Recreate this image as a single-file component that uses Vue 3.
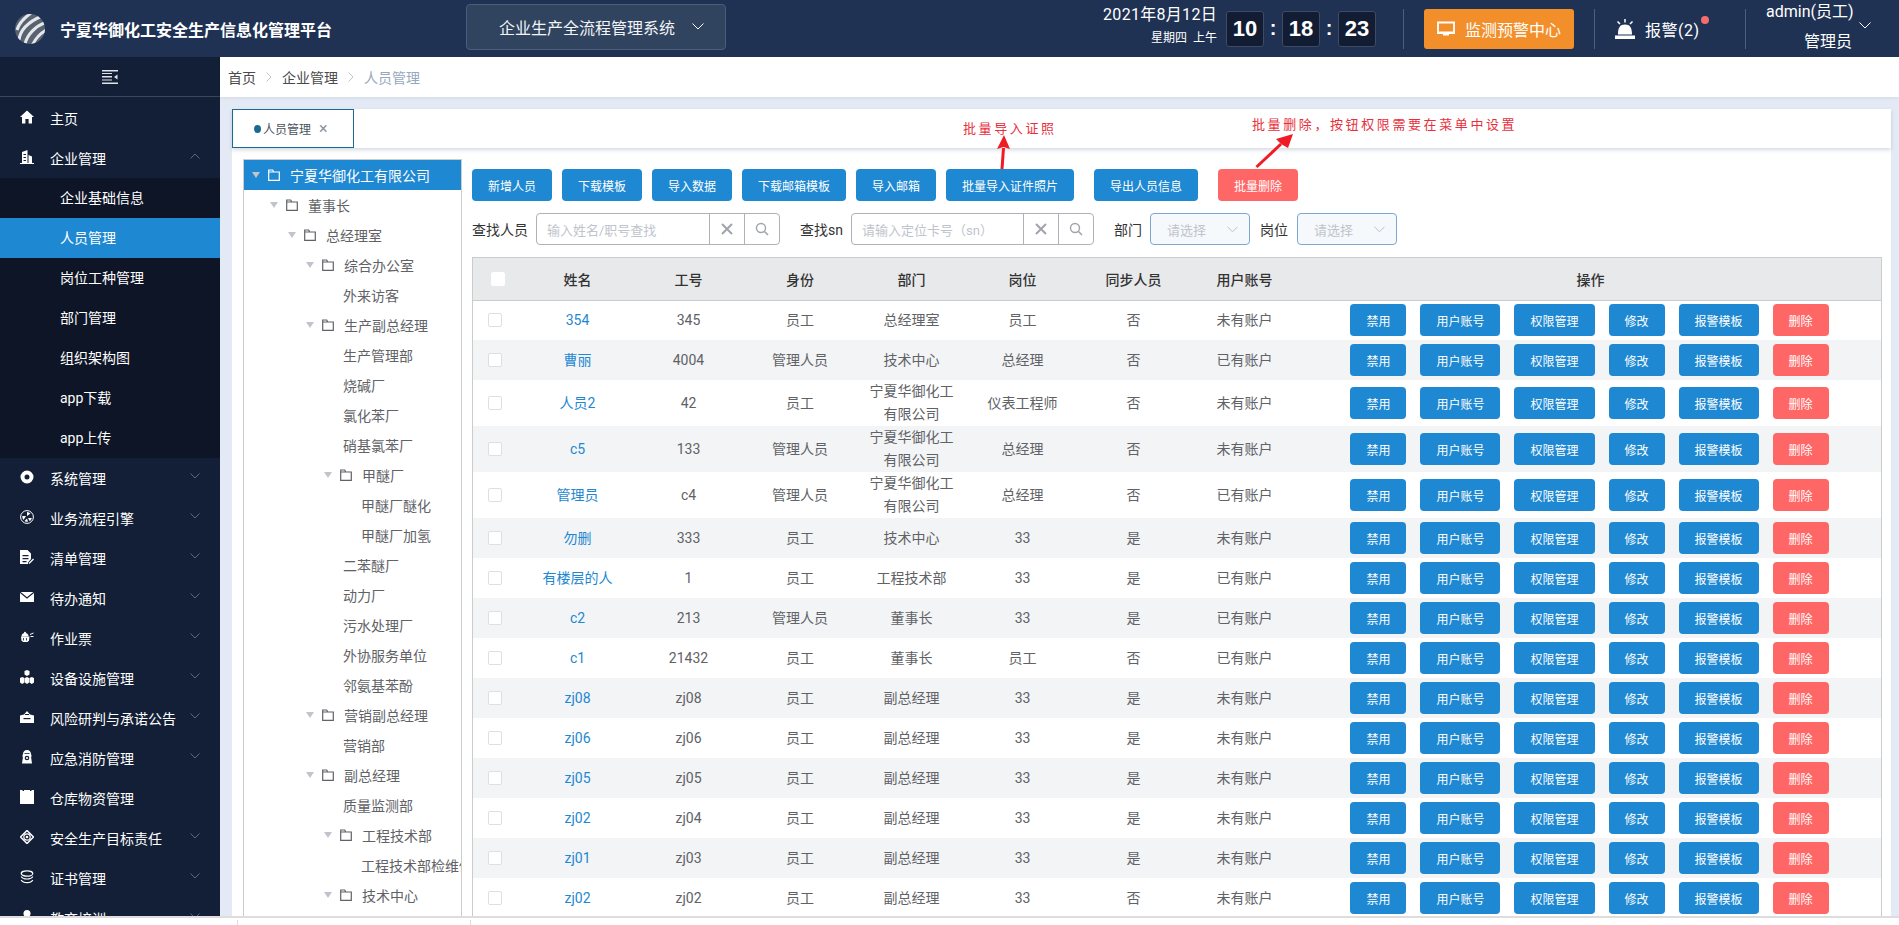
<script setup>
const icons = {
  home: '<path d="M7 .5 14 7h-2v6.5H8.6V9H5.4v4.5H2V7H0z" fill="#fff"/>',
  building: '<path d="M2 13V2l5.5-2v13zM8.5 13V5l3.5 1.500V13zM0 13h14v1H0z" fill="#fff"/><path d="M3.500 4h2.500v1H3.500zM3.500 7h2.500v1H3.500zM3.500 10h2.500v1H3.500z" fill="#131f36"/>',
  ring: '<circle cx="7" cy="7" r="4.500" fill="none" stroke="#fff" stroke-width="4"/>',
  flow: '<circle cx="7" cy="7" r="6.400" fill="none" stroke="#fff" stroke-width="1"/><path d="M7 2v4l3.500-2.500A5 5 0 0 0 7 2zM2.300 6H6L3.500 10A5 5 0 0 1 2.300 6zM8 8h3.800a5 5 0 0 1-2 3.200zM4.500 11l2.500-2.500 1 3.300a5 5 0 0 1-3.500-.8z" fill="#fff"/>',
  list: '<path d="M0 0h7.500L11 3.500V9l-3 3.500V14H0z" fill="#fff"/><path d="M2.500 5h6v1.200h-6zM2.500 8h6v1.200h-6zM2.500 11h4v1.200h-4z" fill="#131f36"/><path d="M9 13.500l4.500-4.500" stroke="#fff" stroke-width="1.200"/>',
  mail: '<path d="M0 2h14v10H0z" fill="#fff"/><path d="M0 2.300 7 8l7-5.700" fill="none" stroke="#131f36" stroke-width="1.200"/>',
  ticket: '<path d="M1 6.500h8.500L9 10.500l-1.500 1.500H3L1.500 10.500z" fill="#fff"/><path d="M1.500 6.500a3.500 3.500 0 0 1 7 0z" fill="#fff"/><circle cx="5" cy="2.800" r="1" fill="#fff"/><path d="M10 4.500l3.500-1.500M10.500 6.500h3" stroke="#fff" stroke-width="1"/><path d="M3.500 8v2.500M6.500 8v2.500" stroke="#131f36" stroke-width=".8"/>',
  cubes: '<path d="M4.500 1 7 0l2.500 1v3.500L7 6 4.500 4.500zM0 8l2.200-1 2.300 1v4.500L2.200 14 0 12.500zM4.900 8l2.100-1 2.100 1v4.500L7 14l-2.100-1.500zM9.500 8l2.300-1 2.200 1v4.500L11.800 14l-2.300-1.500z" fill="#fff"/>',
  case: '<path d="M0 5.500 4 4.500 7 1l3 3.500 4 1V13H0z" fill="#fff"/><path d="M3.500 8h7v1.200h-7z" fill="#131f36"/><path d="M5 4.500h4" stroke="#131f36"/>',
  fire: '<path d="M7 0c2.500 0 4 1.700 4 4l.8 2.500H11l1 7H2l1-7H2.200L3 4c0-2.300 1.500-4 4-4z" fill="#fff"/><circle cx="7" cy="8" r="2.300" fill="#131f36"/><circle cx="7" cy="8" r="1.100" fill="#fff"/><path d="M4.500 3.500h5" stroke="#131f36" stroke-width=".8"/>',
  store: '<path d="M0 0h2.500v1h1.500V0h6v1h1.500V0H14v14H0z" fill="#fff"/>',
  target: '<path d="M7 .5 13.500 7 7 13.500.5 7z" fill="none" stroke="#fff" stroke-width="1.500"/><circle cx="7" cy="7" r="3.200" fill="none" stroke="#fff" stroke-width="1.200"/><circle cx="7" cy="7" r="1.300" fill="#fff"/>',
  stack: '<ellipse cx="7" cy="3.500" rx="5.800" ry="2.700" fill="none" stroke="#fff" stroke-width="1.200"/><path d="M1.200 6.500c1 1.800 3 2.500 5.800 2.500s4.800-.7 5.800-2.500M1.200 10c1 1.800 3 2.700 5.800 2.700s4.800-.9 5.800-2.700" fill="none" stroke="#fff" stroke-width="1.200"/>',
  edu: '<circle cx="7" cy="3.500" r="3.500" fill="#fff"/><path d="M1 14c0-4 3-5.500 6-5.500s6 1.500 6 5.500z" fill="#fff"/>'
}

const menuBefore = [
  { icon: 'home', label: '主页' },
  { icon: 'building', label: '企业管理', open: true, arrow: true }
]
const subMenu = [
  { label: '企业基础信息' },
  { label: '人员管理', active: true },
  { label: '岗位工种管理' },
  { label: '部门管理' },
  { label: '组织架构图' },
  { label: 'app下载' },
  { label: 'app上传' }
]
const menuAfter = [
  { icon: 'ring', label: '系统管理', arrow: true },
  { icon: 'flow', label: '业务流程引擎', arrow: true },
  { icon: 'list', label: '清单管理', arrow: true },
  { icon: 'mail', label: '待办通知', arrow: true },
  { icon: 'ticket', label: '作业票', arrow: true },
  { icon: 'cubes', label: '设备设施管理', arrow: true },
  { icon: 'case', label: '风险研判与承诺公告', arrow: true },
  { icon: 'fire', label: '应急消防管理', arrow: true },
  { icon: 'store', label: '仓库物资管理' },
  { icon: 'target', label: '安全生产目标责任', arrow: true },
  { icon: 'stack', label: '证书管理', arrow: true },
  { icon: 'edu', label: '教育培训', arrow: true }
]

const tree = [
  { t: '宁夏华御化工有限公司', l: 0, folder: true, active: true },
  { t: '董事长', l: 1, folder: true },
  { t: '总经理室', l: 2, folder: true },
  { t: '综合办公室', l: 3, folder: true },
  { t: '外来访客', l: 3 },
  { t: '生产副总经理', l: 3, folder: true },
  { t: '生产管理部', l: 3 },
  { t: '烧碱厂', l: 3 },
  { t: '氯化苯厂', l: 3 },
  { t: '硝基氯苯厂', l: 3 },
  { t: '甲醚厂', l: 4, folder: true },
  { t: '甲醚厂醚化', l: 4 },
  { t: '甲醚厂加氢', l: 4 },
  { t: '二苯醚厂', l: 3 },
  { t: '动力厂', l: 3 },
  { t: '污水处理厂', l: 3 },
  { t: '外协服务单位', l: 3 },
  { t: '邻氨基苯酚', l: 3 },
  { t: '营销副总经理', l: 3, folder: true },
  { t: '营销部', l: 3 },
  { t: '副总经理', l: 3, folder: true },
  { t: '质量监测部', l: 3 },
  { t: '工程技术部', l: 4, folder: true },
  { t: '工程技术部检维修', l: 4 },
  { t: '技术中心', l: 4, folder: true }
]
const treeIndent = (n) => `${(n.folder ? 8 : 45) + n.l * 18}px`

const toolbar = [
  { t: '新增人员' },
  { t: '下载模板' },
  { t: '导入数据' },
  { t: '下载邮箱模板' },
  { t: '导入邮箱' },
  { t: '批量导入证件照片' },
  { t: '导出人员信息', far: true },
  { t: '批量删除', far: true, danger: true }
]

const co = '宁夏华御化工有限公司'
const rows = [
  ['354', '345', '员工', '总经理室', '员工', '否', '未有账户'],
  ['曹丽', '4004', '管理人员', '技术中心', '总经理', '否', '已有账户'],
  ['人员2', '42', '员工', co, '仪表工程师', '否', '未有账户'],
  ['c5', '133', '管理人员', co, '总经理', '否', '未有账户'],
  ['管理员', 'c4', '管理人员', co, '总经理', '否', '已有账户'],
  ['勿删', '333', '员工', '技术中心', '33', '是', '未有账户'],
  ['有楼层的人', '1', '员工', '工程技术部', '33', '是', '已有账户'],
  ['c2', '213', '管理人员', '董事长', '33', '是', '已有账户'],
  ['c1', '21432', '员工', '董事长', '员工', '否', '已有账户'],
  ['zj08', 'zj08', '员工', '副总经理', '33', '是', '未有账户'],
  ['zj06', 'zj06', '员工', '副总经理', '33', '是', '未有账户'],
  ['zj05', 'zj05', '员工', '副总经理', '33', '是', '未有账户'],
  ['zj02', 'zj04', '员工', '副总经理', '33', '是', '未有账户'],
  ['zj01', 'zj03', '员工', '副总经理', '33', '是', '未有账户'],
  ['zj02', 'zj02', '员工', '副总经理', '33', '否', '未有账户']
]
const headers = ['姓名', '工号', '身份', '部门', '岗位', '同步人员', '用户账号']
const ops = ['禁用', '用户账号', '权限管理', '修改', '报警模板', '删除']
</script>

<template>
  <div class="app">
    <header class="top">
      <svg class="logo" viewBox="0 0 30 30">
        <defs><clipPath id="lc"><circle cx="15" cy="15" r="15" /></clipPath></defs>
        <circle cx="15" cy="15" r="15" fill="#59636f" />
        <g clip-path="url(#lc)" fill="none" stroke="#e4e7ec" stroke-width="3">
          <path d="M2 16C4 9 9 4 16 -1" />
          <path d="M4 26C5 17 13 8 27 2" />
          <path d="M10 30C12 21 20 12 32 8" />
          <path d="M17 32C20 25 25 19 33 15" />
          <path d="M25 33C27 28 29 25 33 22" />
        </g>
      </svg>
      <div class="title">宁夏华御化工安全生产信息化管理平台</div>
      <div class="system">
        <span>企业生产全流程管理系统</span>
        <svg class="chev-sys" viewBox="0 0 12 7"><path d="M.5.5 6 6l5.500-5.500" /></svg>
      </div>
      <div class="top-right">
        <div class="date">
          <div class="date-main">2021年8月12日</div>
          <div class="date-sub">星期四&nbsp;&nbsp;上午</div>
        </div>
        <div class="clock">
          <span class="digit">10</span><span class="colon">:</span>
          <span class="digit">18</span><span class="colon">:</span>
          <span class="digit">23</span>
        </div>
        <i class="vline first"></i>
        <div class="monitor">
          <svg viewBox="0 0 18 18" width="18" height="18">
            <path d="M1 2.500h16v10.500H1z" fill="none" stroke="#fff" stroke-width="1.800" />
            <path d="M0 11.500h18v2H0zM6 14h6v1.500H6z" fill="#fff" />
          </svg>
          <span>监测预警中心</span>
        </div>
        <i class="vline"></i>
        <div class="alarm">
          <svg viewBox="0 0 20 20" width="20" height="20">
            <path d="M3 15.500C3 8.500 5 5.500 10 5.500s7 3 7 10zM0 16.500h20V20H0z" fill="#fff" />
            <path d="M10 0v3.500M2.500 2.500 5 5M17.500 2.500 15 5" stroke="#fff" stroke-width="1.500" />
          </svg>
          <span class="alarm-text">报警(2)<b class="dot"></b></span>
        </div>
        <i class="vline alarm-line"></i>
        <div class="user">
          <div>admin(员工)</div>
          <div>管理员</div>
        </div>
        <svg class="chev-user" viewBox="0 0 12 7"><path d="M.5.5 6 6l5.500-5.500" /></svg>
      </div>
    </header>

    <div class="body">
      <aside class="side">
        <div class="toggle">
          <svg viewBox="0 0 16 14" width="16" height="14">
            <path d="M0 0h16v1.500H0zM0 6h10v1.500H0zM0 12.500h16V14H0zM0 3h10v1H0zM0 9.500h10v1H0z" fill="#dfe3ea" />
            <path d="M15.500 4.500v5L12 7z" fill="#dfe3ea" />
          </svg>
        </div>
        <ul class="menu">
          <li v-for="m in menuBefore" :key="m.label" class="item">
            <svg class="mi" viewBox="0 0 14 14" v-html="icons[m.icon]"></svg>
            <span>{{ m.label }}</span>
            <svg v-if="m.arrow" class="ma" viewBox="0 0 10 6"><path d="M.5 5.500 5 1l4.500 4.500" /></svg>
          </li>
          <li v-for="s in subMenu" :key="s.label" class="sub" :class="{ on: s.active }">{{ s.label }}</li>
          <li v-for="m in menuAfter" :key="m.label" class="item">
            <svg class="mi" viewBox="0 0 14 14" v-html="icons[m.icon]"></svg>
            <span>{{ m.label }}</span>
            <svg v-if="m.arrow" class="ma" viewBox="0 0 10 6"><path d="M.5.5 5 5l4.500-4.500" /></svg>
          </li>
        </ul>
      </aside>

      <main class="main">
        <nav class="crumb">
          <span>首页</span>
          <svg viewBox="0 0 6 10"><path d="M.5.500 5 5 .5 9.500" /></svg>
          <span>企业管理</span>
          <svg viewBox="0 0 6 10"><path d="M.5.500 5 5 .5 9.500" /></svg>
          <span class="cur">人员管理</span>
        </nav>
        <div class="panel">
          <div class="tabs">
            <div class="tab"><i></i>人员管理<span class="x">×</span></div>
          </div>
          <div class="content">
            <div class="tree">
              <div
                v-for="n in tree"
                :key="n.t"
                class="node"
                :class="{ on: n.active }"
                :style="{ paddingLeft: treeIndent(n) }"
              >
                <template v-if="n.folder">
                  <i class="caret"></i>
                  <svg class="folder" viewBox="0 0 12 12">
                    <path d="M.7 11.300V1h4l1 2h5.600v8.300zM.7 3h5" />
                  </svg>
                </template>
                <span>{{ n.t }}</span>
              </div>
            </div>

            <section class="right">
              <div class="toolbar">
                <button v-for="b in toolbar" :key="b.t" class="btn" :class="{ far: b.far, danger: b.danger }">{{ b.t }}</button>
              </div>
              <div class="search">
                <label>查找人员</label>
                <div class="input">
                  <span class="ph">输入姓名/职号查找</span>
                  <span class="ic"><svg viewBox="0 0 12 12" width="12" height="12"><path d="M1 1l10 10M11 1 1 11" stroke="#a0a4ab" stroke-width="2" /></svg></span>
                  <span class="ic"><svg viewBox="0 0 14 14" width="14" height="14"><circle cx="6" cy="6" r="4.500" fill="none" stroke="#a0a4ab" stroke-width="1.400" /><path d="M9.500 9.500 13 13" stroke="#a0a4ab" stroke-width="1.600" /></svg></span>
                </div>
                <label class="l-sn">查找sn</label>
                <div class="input sn">
                  <span class="ph">请输入定位卡号（sn）</span>
                  <span class="ic"><svg viewBox="0 0 12 12" width="12" height="12"><path d="M1 1l10 10M11 1 1 11" stroke="#a0a4ab" stroke-width="2" /></svg></span>
                  <span class="ic"><svg viewBox="0 0 14 14" width="14" height="14"><circle cx="6" cy="6" r="4.500" fill="none" stroke="#a0a4ab" stroke-width="1.400" /><path d="M9.500 9.500 13 13" stroke="#a0a4ab" stroke-width="1.600" /></svg></span>
                </div>
                <label class="l-dep">部门</label>
                <div class="select"><span>请选择</span><svg viewBox="0 0 12 7"><path d="M.5.5 6 6l5.500-5.500" /></svg></div>
                <label class="l-pos">岗位</label>
                <div class="select"><span>请选择</span><svg viewBox="0 0 12 7"><path d="M.5.5 6 6l5.500-5.500" /></svg></div>
              </div>
              <div class="table-wrap">
                <table>
                  <colgroup>
                    <col class="c0" /><col class="c1" /><col class="c1" /><col class="c2" /><col class="c1" /><col class="c1" /><col class="c1" /><col class="c1" /><col />
                  </colgroup>
                  <thead>
                    <tr>
                      <th><i class="check head"></i></th>
                      <th v-for="h in headers" :key="h">{{ h }}</th>
                      <th>操作</th>
                    </tr>
                  </thead>
                  <tbody>
                    <tr v-for="(r, i) in rows" :key="i">
                      <td><i class="check"></i></td>
                      <td class="link">{{ r[0] }}</td>
                      <td v-for="(c, j) in r.slice(1)" :key="j">{{ c }}</td>
                      <td>
                        <div class="ops">
                          <button v-for="o in ops" :key="o" class="btn" :class="{ danger: o === '删除' }">{{ o }}</button>
                        </div>
                      </td>
                    </tr>
                  </tbody>
                </table>
              </div>
            </section>
          </div>
        </div>
      </main>
    </div>

    <div class="foot"><i></i><i class="t2"></i></div>

    <div class="note n1">批量导入证照</div>
    <div class="note n2">批量删除，按钮权限需要在菜单中设置</div>
    <svg class="arrows" viewBox="0 0 1899 925">
      <path d="M1002 169 1003.500 148" stroke="#ee1c25" stroke-width="3" fill="none" />
      <path d="M1004 135 1010 149 1003.500 147 997 149z" fill="#ee1c25" />
      <path d="M1256.500 167 1281 144" stroke="#ee1c25" stroke-width="3" fill="none" />
      <path d="M1293 134 1288 148 1281 144 1276 139z" fill="#ee1c25" />
    </svg>
  </div>
</template>

<style>
html, body { margin: 0; padding: 0; overflow: hidden; }
</style>

<style scoped>
* { box-sizing: border-box; }
.app {
  position: relative;
  width: 100%;
  height: 100vh;
  display: flex;
  flex-direction: column;
  overflow: hidden;
  font-family: Roboto, "Noto Sans CJK SC", sans-serif;
  font-size: 14px;
  color: #606266;
  background: #fff;
}
.top {
  flex: 0 0 57px;
  min-height: 0;
  display: flex;
  align-items: center;
  background: #1f3254;
  color: #fff;
  padding-left: 15px;
}
.logo { width: 30px; height: 30px; flex: none; }
.title { margin-left: 15px; font-size: 16px; font-weight: 700; width: 272px; white-space: nowrap; }
.system {
  margin-left: 134px;
  width: 260px;
  height: 46px;
  margin-top: -4px;
  background: #30435f;
  border: 1px solid #4c5d79;
  border-radius: 4px;
  display: flex;
  align-items: center;
  padding-left: 32px;
  font-size: 16px;
  color: #f2f4f7;
}
.chev-sys { width: 12px; height: 7px; margin-left: 17px; }
.chev-sys path, .chev-user path { fill: none; stroke: #fff; stroke-width: 1; }
.top-right { margin-left: auto; height: 57px; display: flex; align-items: center; padding-right: 28px; }
.date { text-align: right; width: 116px; align-self: flex-start; margin-top: 5px; }
.date-main { font-size: 16px; line-height: 20px; white-space: nowrap; letter-spacing: .3px; }
.date-sub { font-size: 12px; line-height: 18px; margin-top: 4px; white-space: nowrap; }
.clock { display: flex; align-items: center; margin-left: 9px; }
.digit {
  width: 38px;
  height: 36px;
  background: #121d33;
  border: 1px solid #3d4c63;
  border-radius: 3px;
  font-family: "Liberation Sans", sans-serif;
  font-size: 22px;
  font-weight: 700;
  display: flex;
  align-items: center;
  justify-content: center;
}
.colon { width: 18px; text-align: center; font-family: "Liberation Sans", sans-serif; font-size: 20px; font-weight: 700; }
.vline { width: 1px; height: 40px; background: #4f5e78; margin: 0 20px; }
.vline.first { margin-left: 27px; }
.vline.alarm-line { margin-left: 0; }
.monitor {
  width: 150px;
  height: 40px;
  background: #f28f2a;
  border-radius: 3px;
  display: flex;
  align-items: center;
  padding-left: 13px;
  font-size: 16px;
  gap: 10px;
}
.alarm { display: flex; align-items: center; width: 130px; }
.alarm-text { position: relative; margin-left: 10px; font-size: 16px; letter-spacing: .5px; }
.dot { position: absolute; right: -9px; top: -1px; width: 8px; height: 8px; border-radius: 50%; background: #f56c6c; }
.user { width: 86px; align-self: flex-start; margin-top: -3px; text-align: right; font-size: 16px; line-height: 30px; white-space: nowrap; }
.chev-user { width: 12px; height: 7px; margin-left: 7px; margin-top: -6px; }

.body { flex: 1; min-height: 0; display: flex; }
.side { width: 220px; flex: none; background: #131f36; overflow: hidden; }
.toggle { height: 40px; display: flex; align-items: center; justify-content: center; border-bottom: 1px solid #3b4657; }
.menu { list-style: none; margin: 1px 0 0; padding: 0; color: #fff; }
.item { position: relative; height: 40px; display: flex; align-items: center; padding-left: 20px; white-space: nowrap; }
.mi { width: 14px; height: 14px; margin-right: 16px; margin-top: -2px; flex: none; }
.ma { position: absolute; left: 190px; top: 15px; width: 10px; height: 6px; }
.ma path { fill: none; stroke: #5b6678; stroke-width: 1; }
.sub { height: 40px; line-height: 40px; padding-left: 60px; background: #0e1527; }
.sub.on { background: #1e88d2; }

.main { flex: 1; min-width: 0; display: flex; flex-direction: column; background: #e4eaf5; }
.crumb {
  flex: 0 0 40px;
  background: #fff;
  display: flex;
  align-items: center;
  padding-left: 8px;
  color: #4a4a4a;
  box-shadow: 0 1px 3px rgba(0, 21, 41, .08);
}
.crumb svg { width: 6px; height: 10px; margin: 0 10px; }
.crumb path { fill: none; stroke: #c0c4cc; stroke-width: 1; }
.cur { color: #97a8be; }
.panel { flex: 1; min-height: 0; margin: 12px 8px 0 12px; display: flex; flex-direction: column; background: #fff; }
.tabs { flex: 0 0 39px; background: #fff; box-shadow: 0 2px 4px rgba(60, 80, 120, .22); position: relative; }
.tab {
  width: 122px;
  height: 39px;
  border: 1px solid #1a6a92;
  display: flex;
  align-items: center;
  padding-left: 21px;
  font-size: 12px;
  color: #4a5560;
}
.tab i { width: 7px; height: 8px; border-radius: 50%; background: #1a6a92; margin-right: 2px; }
.x { margin-left: 8px; font-size: 16px; color: #8a949f; }
.content { flex: 1; min-height: 0; display: flex; padding: 11px 9px 0 11px; overflow: hidden; }
.tree {
  width: 219px;
  flex: none;
  border: 1px solid #ccc;
  border-bottom: 0;
  overflow: hidden;
}
.node { height: 30px; display: flex; align-items: center; white-space: nowrap; color: #606266; }
.node.on { background: #1e88d2; color: #fff; }
.caret {
  width: 0; height: 0; flex: none;
  border-left: 4px solid transparent;
  border-right: 4px solid transparent;
  border-top: 6px solid #c0c4cc;
  margin-right: 8px;
}
.folder { width: 12px; height: 12px; margin-right: 10px; flex: none; }
.folder path { fill: none; stroke: #606266; stroke-width: 1.200; }
.node.on .folder path { stroke: #fff; }
.right { flex: 1; min-width: 0; margin-left: 10px; padding-top: 10px; display: flex; flex-direction: column; }
.btn {
  height: 32px;
  padding: 0 16px;
  border: 0;
  border-radius: 4px;
  background: #1e88d2;
  color: #fff;
  font: 12px Roboto, "Noto Sans CJK SC", sans-serif;
  white-space: nowrap;
}
.btn.danger { background: #ff6666; }
.toolbar { display: flex; gap: 10px; }
.btn.far { margin-left: 10px; }
.search { margin-top: 12px; display: flex; align-items: center; height: 32px; }
.search label { color: #333; white-space: nowrap; }
.search > label:first-child { width: 64px; }
.input {
  width: 244px;
  height: 32px;
  border: 1px solid #aeb1b6;
  border-radius: 4px;
  display: flex;
  align-items: center;
  font-size: 13px;
}
.input.sn { width: 243px; }
.ph { flex: 1; padding-left: 10px; color: #c0c4cc; white-space: nowrap; overflow: hidden; }
.ic {
  width: 35px;
  height: 100%;
  border-left: 1px solid #aeb1b6;
  display: flex;
  align-items: center;
  justify-content: center;
}
.l-sn { margin-left: 20px; width: 51px; }
.l-dep { margin-left: 20px; width: 36px; }
.l-pos { margin-left: 10px; width: 37px; }
.select {
  width: 100px;
  height: 32px;
  background: #f6f9fc;
  border: 1px solid #7ba7d1;
  border-radius: 4px;
  display: flex;
  align-items: center;
  justify-content: space-between;
  padding: 0 11px 0 16px;
  font-size: 13px;
  color: #c0c4cc;
}
.select svg { width: 11px; height: 7px; }
.select path { fill: none; stroke: #b0bccb; stroke-width: 1; }
.table-wrap {
  flex: 1;
  min-height: 0;
  margin-top: 12px;
  overflow: hidden;
  border: 1px solid #ccc;
  border-bottom: 0;
}
table { width: 100%; table-layout: fixed; border-collapse: collapse; }
.c0 { width: 49px; }
.c1 { width: 111px; }
.c2 { width: 112px; }
th {
  height: 42px;
  background: #e8e9eb;
  border-bottom: 1px solid #ccc;
  color: #333;
  font-weight: 500;
  text-align: center;
}
td { height: 40px; padding: 0 12px; text-align: center; line-height: 23px; color: #606266; }
tbody tr:nth-child(even) td { background: #f3f4f6; }
td.link { color: #1e88d2; }
td:first-child, th:first-child { padding: 0; }
.check {
  display: block;
  width: 14px;
  height: 14px;
  margin-left: 15px;
  background: #fff;
  border: 1px solid #dcdfe6;
  border-radius: 2px;
}
.check.head { margin-left: 18px; border-color: #fff; }
.ops { display: flex; justify-content: center; gap: 14px; padding-right: 2px; }

.foot { flex: 0 0 9px; background: #fff; border-top: 2px solid #ddd; display: flex; }
.foot i { width: 1px; height: 5px; margin: 2px 0 0 237px; background: #ddd; }
.foot i.t2 { margin-left: 232px; }

.note {
  position: absolute;
  font-size: 13px;
  letter-spacing: 2.6px;
  color: #e8303c;
  white-space: nowrap;
  line-height: 18px;
}
.n1 { left: 963px; top: 120px; }
.n2 { left: 1252px; top: 116px; }
.arrows { position: absolute; left: 0; top: 0; width: 1899px; height: 925px; pointer-events: none; }
</style>
